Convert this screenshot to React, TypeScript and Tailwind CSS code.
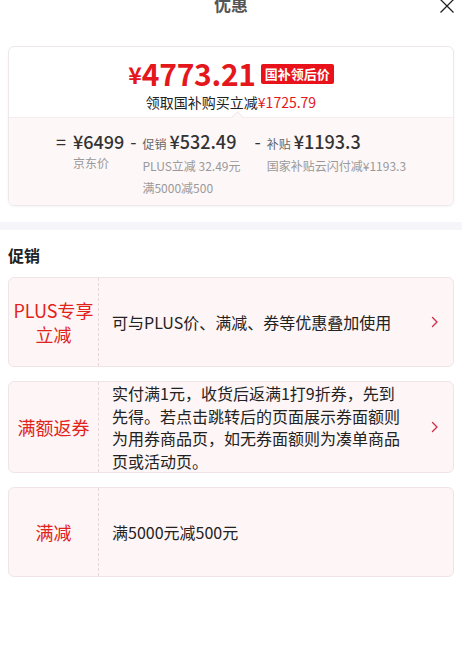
import React from "react";

const font = { fontFamily: '"Noto Sans CJK SC", "Noto Sans", sans-serif' };

const Chevron = () => (
  <svg width="8" height="12" viewBox="0 0 8 12" fill="none">
    <path d="M1.5 1.5 L6 6 L1.5 10.5" stroke="#d0314a" strokeWidth="1.4" strokeLinecap="round" strokeLinejoin="round" />
  </svg>
);

const PromoCard = ({ label, text, arrow }: { label: string; text: string; arrow?: boolean }) => (
  <div className="flex min-h-[90px] rounded-[6px] border border-[#f0e4e6] bg-[#fdf5f6]">
    {/* LABEL */}
    <div className="w-[90px] shrink-0 flex items-center justify-center border-r border-dashed border-[#e8d6d8] px-1">
      <p className="text-[18px] leading-[24px] text-[#e2231a] text-center">{label}</p>
    </div>
    {/* TEXT */}
    <div className="flex-1 flex items-center pl-[13px]">
      <p className="text-[16px] leading-[22.5px] text-[#222]">{text}</p>
    </div>
    <div className="w-[46px] shrink-0 flex items-center justify-end pr-[14px]">{arrow && <Chevron />}</div>
  </div>
);

const App = () => {
  return (
    <div className="w-[462px] min-h-[659px] bg-white overflow-hidden" style={font}>
      {/* HEADER */}
      <div className="relative h-[46px] flex justify-center items-start">
        <p className="text-center text-[17px] font-bold text-[#555] leading-[20px] -mt-[6px]">优惠</p>
        <button className="absolute right-[7px] top-[-2px] text-[#222]">
          <svg width="16" height="16" viewBox="0 0 16 16">
            <path d="M1.5 1.5 L14.5 14.5 M14.5 1.5 L1.5 14.5" stroke="#222" strokeWidth="1.3" />
          </svg>
        </button>
      </div>

      {/* PRICE CARD */}
      <div className="mx-2 rounded-[6px] border border-[#efe8ea] overflow-hidden shadow-[0_1px_3px_rgba(0,0,0,0.04)]">
        <div className="h-[70px] pt-[8px] flex flex-col items-center">
          <div className="flex items-center h-[36px]">
            <span className="text-[#e4171d] font-bold text-[23px] leading-[36px] mt-[2px]">¥</span>
            <span className="text-[#e4171d] font-bold text-[30px] leading-[36px] tracking-[-0.3px]">4773.21</span>
            <span className="ml-[5px] mt-[2px] bg-[#e9121b] text-white text-[13px] font-bold leading-[20px] px-[4px] rounded-[2px]">
              国补领后价
            </span>
          </div>
          <p className="text-[14px] leading-[20px] text-[#222] mt-[1px]">
            领取国补购买立减<span className="text-[#e4171d]">¥1725.79</span>
          </p>
        </div>
        <div className="relative bg-[#fdf7f8] border-t border-[#f6ecee] pt-[12px] pb-[6px] flex justify-center">
          <div className="absolute left-[224px] -top-[5px] w-[9px] h-[9px] rotate-45 bg-[#fdf7f8] border-l border-t border-[#f2e6e8]" />
          <div className="flex items-start text-[#333]">
            <span className="text-[18px] leading-[22px] mr-[7px]">=</span>
            {/* JD PRICE */}
            <div className="flex flex-col">
              <span className="text-[18px] leading-[22px] font-medium">¥6499</span>
              <span className="text-[12px] leading-[22px] text-[#999]">京东价</span>
            </div>
            <span className="text-[18px] leading-[22px] mx-[6px]">-</span>
            {/* PROMO */}
            <div className="flex flex-col">
              <span className="leading-[22px]">
                <span className="text-[12px] text-[#666]">促销</span>
                <span className="text-[18px] font-medium ml-[3px]">¥532.49</span>
              </span>
              <span className="text-[12px] leading-[22px] text-[#999]">PLUS立减 32.49元</span>
              <span className="text-[12px] leading-[22px] text-[#999]">满5000减500</span>
            </div>
            <span className="text-[18px] leading-[22px] ml-[14px] mr-[6px]">-</span>
            {/* SUBSIDY */}
            <div className="flex flex-col">
              <span className="leading-[22px]">
                <span className="text-[12px] text-[#666]">补贴</span>
                <span className="text-[18px] font-medium ml-[3px]">¥1193.3</span>
              </span>
              <span className="text-[12px] leading-[22px] text-[#999]">国家补贴云闪付减¥1193.3</span>
            </div>
          </div>
        </div>
      </div>

      {/* DIVIDER BAND */}
      <div className="mt-[16px] h-[8px] bg-[#f6f6fa]" />

      {/* PROMOTIONS */}
      <div className="px-2 pt-[13px]">
        <p className="text-[16px] font-bold leading-[24px] text-[#222]">促销</p>
        <div className="mt-[10px] flex flex-col gap-[14px]">
          <PromoCard label="PLUS专享立减" text="可与PLUS价、满减、券等优惠叠加使用" arrow />
          <PromoCard
            label="满额返券"
            text="实付满1元，收货后返满1打9折券，先到先得。若点击跳转后的页面展示券面额则为用券商品页，如无券面额则为凑单商品页或活动页。"
            arrow
          />
          <PromoCard label="满减" text="满5000元减500元" />
        </div>
      </div>
    </div>
  );
};

export default App;
